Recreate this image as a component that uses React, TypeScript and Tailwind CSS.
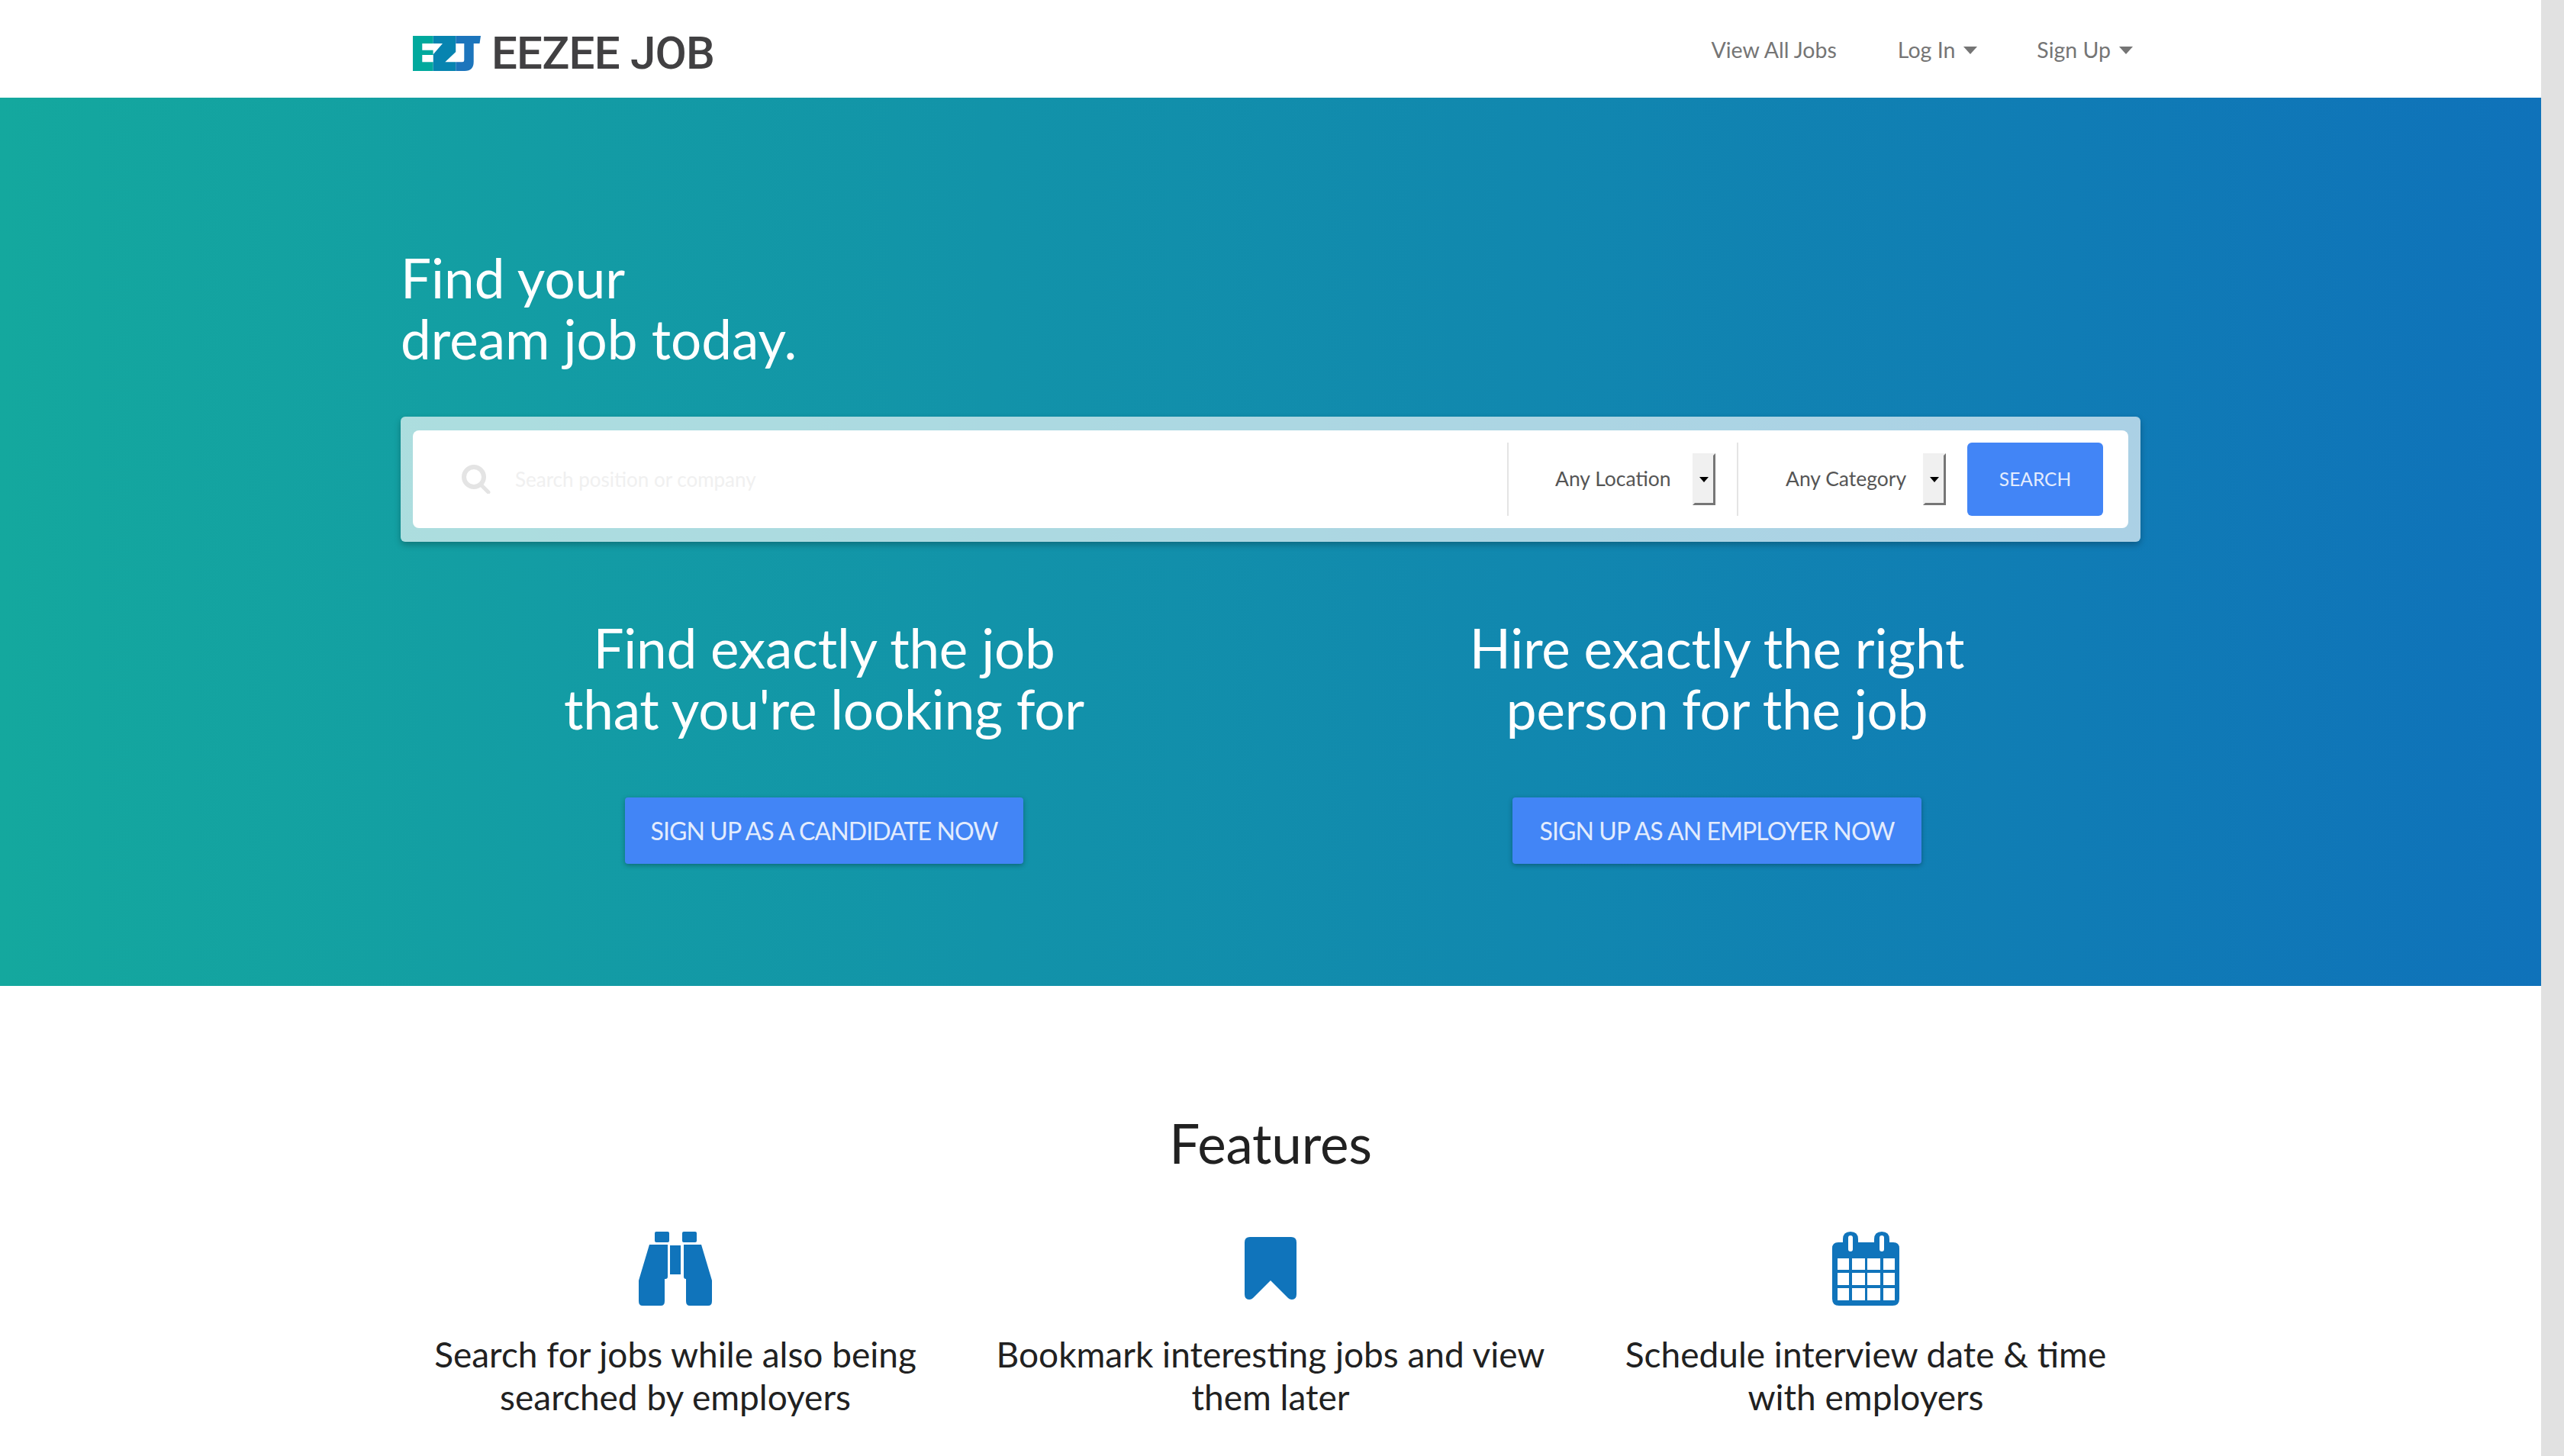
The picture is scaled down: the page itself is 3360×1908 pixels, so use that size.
const sans = "font-['Lato','Noto_Sans',sans-serif]"

function Caret() {
  return <span className="ml-[11px] mt-[2px] h-0 w-0 border-x-[9px] border-t-[10px] border-x-transparent border-t-[#757575]" />
}

function Logo() {
  return (
    <svg width="89" height="46" viewBox="0 0 89 46" className="shrink-0">
      <path d="M0 0H26.7V46H0Z" fill="#00a99d" />
      <path d="M26.7 0H56.3V46H26.7Z" fill="#0784b0" />
      <path d="M56.3 0H89L87.5 10H79.7V34Q79.7 46 68 46H56.3Z" fill="#1c75bc" />
      <path d="M12.3 10H39L26.7 24.3V18.7H12.3Z" fill="#fff" />
      <path d="M12.3 25H26.7V34.3H12.3Z" fill="#fff" />
      <path d="M42.3 34.3L56.3 21V10H67.3V32Q67.3 34.3 65 34.3Z" fill="#fff" />
    </svg>
  )
}

function SearchIcon() {
  return (
    <svg width="38" height="38" viewBox="0 0 38 38" fill="none" stroke="#e4e4e4" className="shrink-0">
      <circle cx="16" cy="16" r="13" strokeWidth="6" />
      <path d="M25 26L35 36" strokeWidth="5" strokeLinecap="round" />
    </svg>
  )
}

function SelectBox({ label, className }: { label: string; className: string }) {
  return (
    <div className={`flex items-center border-l-2 border-[#e4e4e4] ${className}`}>
      <span className="text-[26.5px] text-[#555]">{label}</span>
      <span className="ml-auto flex h-[68px] w-[30px] items-center justify-center border-[3px] border-[#f0f0f0] border-r-[#767676] border-b-[#767676] bg-[#f0f0f0]">
        <span className="h-0 w-0 border-x-[6px] border-t-[7px] border-x-transparent border-t-black" />
      </span>
    </div>
  )
}

function BinocularsIcon() {
  return (
    <svg width="96" height="97" viewBox="0 0 96 97" fill="#1074bb">
      <rect x="21" y="0" width="19" height="14" rx="2" />
      <rect x="57" y="0" width="19" height="14" rx="2" />
      <rect x="41" y="18" width="14" height="38" />
      <path d="M14 17H38V59Q38 62 35 62H34V91Q34 97 29 97H5Q0 97 0 91V64Z" />
      <path d="M82 17H59V59Q59 62 62 62V91Q62 97 67 97H91Q96 97 96 91V64Z" />
    </svg>
  )
}

function BookmarkIcon() {
  return (
    <svg width="68" height="82" viewBox="0 0 68 82" fill="#1074bb">
      <path d="M7 0H61Q68 0 68 7V75Q68 82 62 82Q59 82 57 80L34 57L11 80Q9 82 6 82Q0 82 0 75V7Q0 0 7 0Z" />
    </svg>
  )
}

function CalendarIcon() {
  return (
    <svg width="88" height="97" viewBox="0 0 88 97">
      <path
        fill="#1074bb"
        fillRule="evenodd"
        d="M14 14V10Q14 0 24 0Q34 0 34 10V14H55V10Q55 0 65 0Q75 0 75 10V14H80Q88 14 88 22V88Q88 97 79 97H9Q0 97 0 88V22Q0 14 8 14ZM21 8V23Q21 26 24 26Q27 26 27 23V8Q27 5 24 5Q21 5 21 8ZM62 8V23Q62 26 65 26Q68 26 68 23V8Q68 5 65 5Q62 5 62 8Z"
      />
      <g fill="#fff">
        <rect x="7" y="35" width="15" height="15" />
        <rect x="26" y="35" width="17" height="15" />
        <rect x="46" y="35" width="17" height="15" />
        <rect x="67" y="35" width="15" height="15" />
        <rect x="7" y="54" width="15" height="16" />
        <rect x="26" y="54" width="17" height="16" />
        <rect x="46" y="54" width="17" height="16" />
        <rect x="67" y="54" width="15" height="16" />
        <rect x="7" y="74" width="15" height="16" />
        <rect x="26" y="74" width="17" height="16" />
        <rect x="46" y="74" width="17" height="16" />
        <rect x="67" y="74" width="15" height="16" />
      </g>
    </svg>
  )
}

const features = [
  { icon: <BinocularsIcon />, lines: ["Search for jobs while also being", "searched by employers"] },
  { icon: <BookmarkIcon />, lines: ["Bookmark interesting jobs and view", "them later"] },
  { icon: <CalendarIcon />, lines: ["Schedule interview date & time", "with employers"] },
]

const calls = [
  { title: ["Find exactly the job", "that you're looking for"], cta: "SIGN UP AS A CANDIDATE NOW", width: "w-[522px]" },
  { title: ["Hire exactly the right", "person for the job"], cta: "SIGN UP AS AN EMPLOYER NOW", width: "w-[536px]" },
]

export default function App() {
  return (
    <div className={`flex h-[1908px] overflow-hidden bg-white ${sans}`}>
      <div className="min-w-0 flex-1">
        <header className="h-[128px] bg-white">
          <div className="mx-auto flex h-full w-[2280px] items-center">
            <div className="ml-[16px] mt-[12px] flex items-center">
              <Logo />
              <span className="ml-[14px] font-['Roboto',sans-serif] text-[60px] font-medium leading-none tracking-[-0.8px] text-[#414042]">EEZEE JOB</span>
            </div>
            <nav className="ml-auto mr-[10px] mt-[2px] flex items-center text-[28.5px] text-[#757575]">
              <a>View All Jobs</a>
              <a className="ml-[80px] flex items-center">Log In<Caret /></a>
              <a className="ml-[78px] flex items-center">Sign Up<Caret /></a>
            </nav>
          </div>
        </header>

        <section className="h-[1164px] bg-linear-to-r/srgb from-[#14a89e] to-[#0f72ba] pt-[196px] text-white">
          <div className="mx-auto w-[2280px]">
            <h1 className="text-[71px] leading-[80px]">Find your<br />dream job today.</h1>

            <div className="mt-[62px] h-[164px] rounded-[6px] bg-white/65 px-[16px] py-[18px] shadow-[0_4px_8px_rgba(0,0,0,0.25)]">
              <div className="flex h-[128px] items-center rounded-[8px] bg-white pl-[64px] pr-[33px]">
                <SearchIcon />
                <input
                  placeholder="Search position or company"
                  className="ml-[32px] min-w-0 flex-1 bg-transparent text-[26px] outline-none placeholder:text-[#f0f0f0]"
                />
                <SelectBox label="Any Location" className="h-[96px] w-[301px] pl-[61px] pr-[28px]" />
                <SelectBox label="Any Category" className="h-[96px] w-[302px] pl-[62px] pr-[28px]" />
                <button className="h-[96px] w-[178px] rounded-[6px] bg-[#4285f6] text-[24.5px] text-[#e3ecfd]">SEARCH</button>
              </div>
            </div>

            <div className="mt-[99px] flex">
              {calls.map((c, i) => (
                <div key={c.cta} className={`flex w-[1110px] flex-col items-center ${i === 0 ? "" : "ml-[60px]"}`}>
                  <h2 className="text-center text-[71px] leading-[80px] tracking-[-0.2px]">{c.title[0]}<br />{c.title[1]}</h2>
                  <button className={`mt-[76px] h-[87px] whitespace-nowrap rounded-[4px] bg-[#4285f6] text-[32px] tracking-[-0.9px] text-[#e3ecfd] shadow-[0_2px_6px_rgba(0,0,0,0.3)] ${c.width}`}>{c.cta}</button>
                </div>
              ))}
            </div>
          </div>
        </section>

        <section className="pt-[166px] text-[#212121]">
          <h2 className="text-center text-[71px] leading-[80px] tracking-[-0.2px]">Features</h2>
          <div className="mx-auto mt-[74px] grid w-[2340px] grid-cols-3">
            {features.map((f) => (
              <div key={f.lines[0]} className="flex flex-col items-center">
                <div className="flex h-[100px] items-center justify-center">{f.icon}</div>
                <p className="mt-[35px] text-center text-[46px] leading-[56px]">{f.lines[0]}<br />{f.lines[1]}</p>
              </div>
            ))}
          </div>
        </section>
      </div>
      <div className="w-[30px] shrink-0 bg-[#e1e1e1]" />
    </div>
  )
}
